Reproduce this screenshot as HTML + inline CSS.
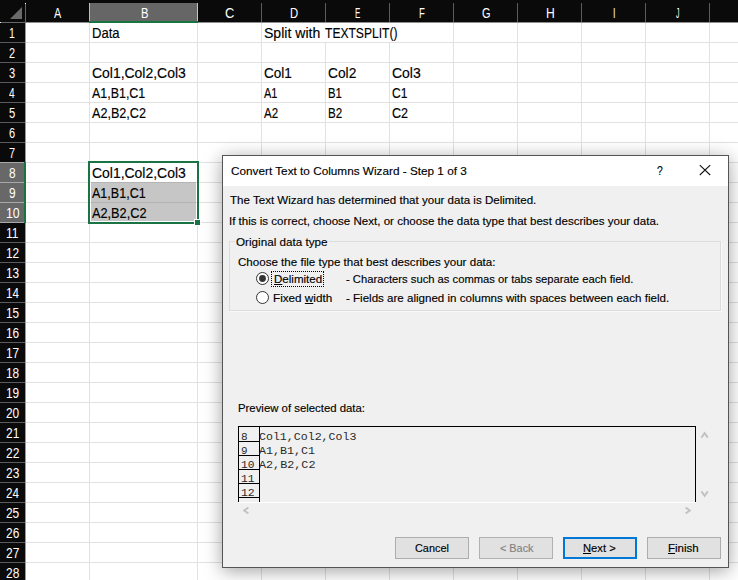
<!DOCTYPE html>
<html lang="en"><head><meta charset="utf-8"><title>Convert Text to Columns Wizard</title>
<style>
html,body{margin:0;padding:0;}
body{width:738px;height:580px;overflow:hidden;background:#fff;position:relative;font-family:"Liberation Sans",sans-serif;}
.a{position:absolute;}
.t{position:absolute;white-space:nowrap;line-height:20px;height:20px;transform-origin:0 50%;color:#000;}
.t u{text-decoration:underline;text-decoration-thickness:1px;text-underline-offset:1px;}
.d{-webkit-text-stroke:0.15px currentColor;}
.g{-webkit-text-stroke:0.15px currentColor;}
.gv{position:absolute;top:23px;width:1px;height:557px;background:#e1e1e1;}
.gh{position:absolute;left:26px;width:712px;height:1px;background:#e1e1e1;}
.hs{position:absolute;top:3px;width:1px;height:19px;background:#5c5c62;}
.rs{position:absolute;left:0;width:25px;height:1px;background:#5a5a60;}
.btn{position:absolute;top:537px;width:72px;height:20px;border:1px solid #adadad;background:#e1e1e1;}
</style></head><body>

<div class="gv" style="left:89px"></div>
<div class="gv" style="left:197px"></div>
<div class="gv" style="left:261px"></div>
<div class="gv" style="left:325px"></div>
<div class="gv" style="left:389px"></div>
<div class="gv" style="left:453px"></div>
<div class="gv" style="left:517px"></div>
<div class="gv" style="left:581px"></div>
<div class="gv" style="left:645px"></div>
<div class="gv" style="left:709px"></div>
<div class="gh" style="top:42px"></div>
<div class="gh" style="top:62px"></div>
<div class="gh" style="top:82px"></div>
<div class="gh" style="top:102px"></div>
<div class="gh" style="top:122px"></div>
<div class="gh" style="top:142px"></div>
<div class="gh" style="top:162px"></div>
<div class="gh" style="top:182px"></div>
<div class="gh" style="top:202px"></div>
<div class="gh" style="top:222px"></div>
<div class="gh" style="top:242px"></div>
<div class="gh" style="top:262px"></div>
<div class="gh" style="top:282px"></div>
<div class="gh" style="top:302px"></div>
<div class="gh" style="top:322px"></div>
<div class="gh" style="top:342px"></div>
<div class="gh" style="top:362px"></div>
<div class="gh" style="top:382px"></div>
<div class="gh" style="top:402px"></div>
<div class="gh" style="top:422px"></div>
<div class="gh" style="top:442px"></div>
<div class="gh" style="top:462px"></div>
<div class="gh" style="top:482px"></div>
<div class="gh" style="top:502px"></div>
<div class="gh" style="top:522px"></div>
<div class="gh" style="top:542px"></div>
<div class="gh" style="top:562px"></div>
<div class="a" style="left:325px;top:23px;width:1px;height:19px;background:#fff"></div>
<div class="a" style="left:389px;top:23px;width:1px;height:19px;background:#fff"></div>
<div class="a" style="left:0;top:0;width:738px;height:22px;background:#0a0a0a"></div>
<div class="a" style="left:26px;top:22px;width:712px;height:1px;background:#8e8e8e"></div>
<div class="a" style="left:0;top:0;width:25px;height:580px;background:#0a0a0a"></div>
<div class="a" style="left:25px;top:23px;width:1px;height:557px;background:#9a9a9a"></div>
<div class="a" style="left:25px;top:3px;width:1px;height:20px;background:#66666c"></div>
<div class="a" style="left:25px;top:3px;width:1px;height:1px;background:#fff"></div>
<div class="a" style="left:0;top:22px;width:26px;height:1px;background:#66666c"></div>
<div class="a" style="left:0;top:22px;width:1px;height:1px;background:#e8e8e8"></div>
<svg class="a" style="left:10px;top:7px" width="13" height="13" viewBox="0 0 13 13"><polygon points="12,0 12,12 0,12" fill="#6a6a6a"/></svg>
<div class="hs" style="left:261px"></div>
<div class="hs" style="left:325px"></div>
<div class="hs" style="left:389px"></div>
<div class="hs" style="left:453px"></div>
<div class="hs" style="left:517px"></div>
<div class="hs" style="left:581px"></div>
<div class="hs" style="left:645px"></div>
<div class="hs" style="left:709px"></div>
<div class="rs" style="top:42px"></div>
<div class="rs" style="top:62px"></div>
<div class="rs" style="top:82px"></div>
<div class="rs" style="top:102px"></div>
<div class="rs" style="top:122px"></div>
<div class="rs" style="top:142px"></div>
<div class="rs" style="top:162px"></div>
<div class="rs" style="top:182px"></div>
<div class="rs" style="top:202px"></div>
<div class="rs" style="top:222px"></div>
<div class="rs" style="top:242px"></div>
<div class="rs" style="top:262px"></div>
<div class="rs" style="top:282px"></div>
<div class="rs" style="top:302px"></div>
<div class="rs" style="top:322px"></div>
<div class="rs" style="top:342px"></div>
<div class="rs" style="top:362px"></div>
<div class="rs" style="top:382px"></div>
<div class="rs" style="top:402px"></div>
<div class="rs" style="top:422px"></div>
<div class="rs" style="top:442px"></div>
<div class="rs" style="top:462px"></div>
<div class="rs" style="top:482px"></div>
<div class="rs" style="top:502px"></div>
<div class="rs" style="top:522px"></div>
<div class="rs" style="top:542px"></div>
<div class="rs" style="top:562px"></div>
<div class="a" style="left:89px;top:3px;width:109px;height:18px;background:#666"></div>
<div class="a" style="left:89px;top:3px;width:1px;height:18px;background:#bdbdbd"></div>
<div class="a" style="left:197px;top:3px;width:1px;height:18px;background:#c4c4c4"></div>
<div class="a" style="left:89px;top:21px;width:109px;height:2px;background:#17753f"></div>
<div class="a" style="left:0;top:162px;width:24px;height:61px;background:#686868"></div>
<div class="a" style="left:0;top:162px;width:24px;height:1px;background:#a8a8a8"></div>
<div class="a" style="left:0;top:182px;width:24px;height:1px;background:#a8a8a8"></div>
<div class="a" style="left:0;top:202px;width:24px;height:1px;background:#a8a8a8"></div>
<div class="a" style="left:0;top:222px;width:24px;height:1px;background:#a8a8a8"></div>
<div class="a" style="left:24px;top:162px;width:2px;height:61px;background:#17753f"></div>
<div class="a" style="left:91px;top:183px;width:105px;height:38px;background:#c6c6c6"></div>
<div class="a" style="left:91px;top:202px;width:105px;height:1px;background:#b4b4b4"></div>
<div class="a" style="left:91px;top:182px;width:105px;height:1px;background:#b4b4b4"></div>
<div class="a" style="left:88px;top:161px;width:107px;height:59px;border:2px solid #1a7343"></div>
<div class="a" style="left:194px;top:219px;width:5px;height:5px;background:#1a7343;border:1px solid #fff"></div>
<div class="a" id="dlg" style="left:222px;top:155px;width:505px;height:411px;border:1px solid #555;background:#f0f0f0;box-shadow:0 3px 17px rgba(0,0,0,.37)"></div>
<div class="a" style="left:223px;top:156px;width:505px;height:30px;background:#fff"></div>
<svg class="a" style="left:699px;top:164px" width="13" height="13" viewBox="0 0 13 13"><path d="M0.8 1.2L11.2 11M11.2 1.2L0.8 11" stroke="#111" stroke-width="1.1" fill="none"/></svg>
<div class="a" style="left:229px;top:241px;width:490px;height:68px;border:1px solid #dcdcdc;box-shadow:1px 1px 0 #f8f8f8"></div>
<div class="a" style="left:235px;top:236px;width:94px;height:12px;background:#f0f0f0"></div>
<svg class="a" style="left:255px;top:271px" width="15" height="15" viewBox="0 0 15 15"><circle cx="7.5" cy="7.5" r="6" fill="#fff" stroke="#333" stroke-width="1"/><circle cx="7.5" cy="7.5" r="3.4" fill="#333"/></svg>
<svg class="a" style="left:255px;top:290px" width="15" height="15" viewBox="0 0 15 15"><circle cx="7.5" cy="7.5" r="6" fill="#fff" stroke="#333" stroke-width="1"/></svg>
<div class="a" style="left:271px;top:271px;width:53px;height:16px;border:1px dotted #000;box-sizing:border-box"></div>
<div class="a" style="left:238px;top:426px;width:458px;height:1px;background:#000"></div>
<div class="a" style="left:238px;top:426px;width:1px;height:76px;background:#000"></div>
<div class="a" style="left:695px;top:426px;width:1px;height:76px;background:#000"></div>
<div class="a" style="left:238px;top:502px;width:458px;height:1px;background:#fff"></div>
<div class="a" style="left:259px;top:426px;width:1px;height:76px;background:#000"></div>
<div class="a" style="left:238px;top:441px;width:22px;height:1px;background:#000"></div>
<div class="a" style="left:238px;top:455px;width:22px;height:1px;background:#000"></div>
<div class="a" style="left:238px;top:469px;width:22px;height:1px;background:#000"></div>
<div class="a" style="left:238px;top:483px;width:22px;height:1px;background:#000"></div>
<div class="a" style="left:238px;top:497px;width:22px;height:1px;background:#000"></div>
<svg class="a" style="left:699px;top:430px" width="12" height="10" viewBox="0 0 12 10"><path d="M2.4 7.6L5.6 3.2L8.8 7.6" stroke="#c1c1c1" stroke-width="1.9" fill="none"/></svg>
<svg class="a" style="left:699px;top:489px" width="12" height="10" viewBox="0 0 12 10"><path d="M2.4 2.4L5.6 6.8L8.8 2.4" stroke="#c1c1c1" stroke-width="1.9" fill="none"/></svg>
<svg class="a" style="left:241px;top:505px" width="10" height="12" viewBox="0 0 10 12"><path d="M7.4 2.4L3.2 5.5L7.4 8.6" stroke="#c1c1c1" stroke-width="1.9" fill="none"/></svg>
<svg class="a" style="left:683px;top:505px" width="10" height="12" viewBox="0 0 10 12"><path d="M2.6 2.4L6.8 5.5L2.6 8.6" stroke="#c1c1c1" stroke-width="1.9" fill="none"/></svg>
<div class="btn" style="left:395px"></div>
<div class="btn" style="left:479px;border-color:#b2b2b2"></div>
<div class="btn" style="left:563px;border:2px solid #0078d7;width:70px;height:18px"></div>
<div class="btn" style="left:647px"></div>
<span class="t g" style="left:92.20px;top:23.00px;font-size:14px;transform:scaleX(0.9331);">Data</span>
<span class="t g" style="left:92.02px;top:63.00px;font-size:14px;transform:scaleX(0.9959);">Col1,Col2,Col3</span>
<span class="t g" style="left:92.40px;top:83.00px;font-size:14px;transform:scaleX(0.8885);">A1,B1,C1</span>
<span class="t g" style="left:92.20px;top:103.00px;font-size:14px;transform:scaleX(0.9009);">A2,B2,C2</span>
<span class="t g" style="left:263.69px;top:23.00px;font-size:14px;transform:scaleX(1.0035);">Split with </span>
<span class="t g" style="left:324.50px;top:23.00px;font-size:14px;transform:scaleX(0.8629);">TEXTSPLIT()</span>
<span class="t g" style="left:263.82px;top:63.00px;font-size:14px;transform:scaleX(0.9680);">Col1</span>
<span class="t g" style="left:328.12px;top:63.00px;font-size:14px;transform:scaleX(0.9829);">Col2</span>
<span class="t g" style="left:392.23px;top:63.00px;font-size:14px;transform:scaleX(0.9958);">Col3</span>
<span class="t g" style="left:264.11px;top:83.00px;font-size:14px;transform:scaleX(0.7881);">A1</span>
<span class="t g" style="left:327.79px;top:83.00px;font-size:14px;transform:scaleX(0.8096);">B1</span>
<span class="t g" style="left:392.34px;top:83.00px;font-size:14px;transform:scaleX(0.8576);">C1</span>
<span class="t g" style="left:264.00px;top:103.00px;font-size:14px;transform:scaleX(0.8220);">A2</span>
<span class="t g" style="left:327.87px;top:103.00px;font-size:14px;transform:scaleX(0.8307);">B2</span>
<span class="t g" style="left:392.42px;top:103.00px;font-size:14px;transform:scaleX(0.8954);">C2</span>
<span class="t g" style="left:92.02px;top:163.00px;font-size:14px;transform:scaleX(0.9959);">Col1,Col2,Col3</span>
<span class="t g" style="left:92.39px;top:183.00px;font-size:14px;transform:scaleX(0.8959);">A1,B1,C1</span>
<span class="t g" style="left:92.34px;top:203.00px;font-size:14px;transform:scaleX(0.9096);">A2,B2,C2</span>
<span class="t" style="left:54.25px;top:3.00px;font-size:14px;color:#fff;transform:scaleX(0.7746);">A</span>
<span class="t" style="left:141.21px;top:3.00px;font-size:14px;color:#fff;transform:scaleX(0.8020);">B</span>
<span class="t" style="left:225.23px;top:3.00px;font-size:14px;color:#fff;transform:scaleX(0.9195);">C</span>
<span class="t" style="left:289.99px;top:3.00px;font-size:14px;color:#fff;transform:scaleX(0.8057);">D</span>
<span class="t" style="left:355.00px;top:3.00px;font-size:14px;color:#fff;transform:scaleX(0.5672);">E</span>
<span class="t" style="left:419.15px;top:3.00px;font-size:14px;color:#fff;transform:scaleX(0.6805);">F</span>
<span class="t" style="left:481.73px;top:3.00px;font-size:14px;color:#fff;transform:scaleX(0.7849);">G</span>
<span class="t" style="left:545.92px;top:3.00px;font-size:14px;color:#fff;transform:scaleX(0.8666);">H</span>
<span class="t" style="left:613.04px;top:3.00px;font-size:14px;color:#fff;transform:scaleX(0.6279);">I</span>
<span class="t" style="left:675.50px;top:3.00px;font-size:14px;color:#fff;transform:scaleX(0.4857);">J</span>
<span class="t" style="left:9.12px;top:23.00px;font-size:14px;color:#fff;transform:scaleX(0.7529);">1</span>
<span class="t" style="left:9.45px;top:43.00px;font-size:14px;color:#fff;transform:scaleX(0.7779);">2</span>
<span class="t" style="left:9.47px;top:63.00px;font-size:14px;color:#fff;transform:scaleX(0.7895);">3</span>
<span class="t" style="left:9.25px;top:83.00px;font-size:14px;color:#fff;transform:scaleX(0.7300);">4</span>
<span class="t" style="left:9.21px;top:103.00px;font-size:14px;color:#fff;transform:scaleX(0.8018);">5</span>
<span class="t" style="left:9.49px;top:123.00px;font-size:14px;color:#fff;transform:scaleX(0.7877);">6</span>
<span class="t" style="left:9.44px;top:143.00px;font-size:14px;color:#fff;transform:scaleX(0.7781);">7</span>
<span class="t" style="left:8.86px;top:163.00px;font-size:14px;color:#fff;transform:scaleX(0.8471);">8</span>
<span class="t" style="left:8.83px;top:183.00px;font-size:14px;color:#fff;transform:scaleX(0.8489);">9</span>
<span class="t" style="left:5.70px;top:203.00px;font-size:14px;color:#fff;transform:scaleX(0.8770);">10</span>
<span class="t" style="left:6.21px;top:223.00px;font-size:14px;color:#fff;transform:scaleX(0.8546);">11</span>
<span class="t" style="left:6.11px;top:243.00px;font-size:14px;color:#fff;transform:scaleX(0.8485);">12</span>
<span class="t" style="left:6.12px;top:263.00px;font-size:14px;color:#fff;transform:scaleX(0.8472);">13</span>
<span class="t" style="left:6.11px;top:283.00px;font-size:14px;color:#fff;transform:scaleX(0.8278);">14</span>
<span class="t" style="left:6.13px;top:303.00px;font-size:14px;color:#fff;transform:scaleX(0.8409);">15</span>
<span class="t" style="left:6.12px;top:323.00px;font-size:14px;color:#fff;transform:scaleX(0.8440);">16</span>
<span class="t" style="left:6.11px;top:343.00px;font-size:14px;color:#fff;transform:scaleX(0.8485);">17</span>
<span class="t" style="left:6.12px;top:363.00px;font-size:14px;color:#fff;transform:scaleX(0.8461);">18</span>
<span class="t" style="left:6.12px;top:383.00px;font-size:14px;color:#fff;transform:scaleX(0.8479);">19</span>
<span class="t" style="left:5.96px;top:403.00px;font-size:14px;color:#fff;transform:scaleX(0.8482);">20</span>
<span class="t" style="left:5.96px;top:423.00px;font-size:14px;color:#fff;transform:scaleX(0.8525);">21</span>
<span class="t" style="left:5.96px;top:443.00px;font-size:14px;color:#fff;transform:scaleX(0.8546);">22</span>
<span class="t" style="left:5.96px;top:463.00px;font-size:14px;color:#fff;transform:scaleX(0.8540);">23</span>
<span class="t" style="left:6.03px;top:483.00px;font-size:14px;color:#fff;transform:scaleX(0.8333);">24</span>
<span class="t" style="left:5.96px;top:503.00px;font-size:14px;color:#fff;transform:scaleX(0.8503);">25</span>
<span class="t" style="left:5.96px;top:523.00px;font-size:14px;color:#fff;transform:scaleX(0.8509);">26</span>
<span class="t" style="left:5.96px;top:543.00px;font-size:14px;color:#fff;transform:scaleX(0.8546);">27</span>
<span class="t" style="left:5.96px;top:563.00px;font-size:14px;color:#fff;transform:scaleX(0.8540);">28</span>
<span class="t d" style="left:231.35px;top:161.00px;font-size:11.5px;transform:scaleX(1.0228);">Convert Text to Columns Wizard - Step 1 of 3</span>
<span class="t d" style="left:657.23px;top:160.50px;font-size:13px;transform:scaleX(0.7981);">?</span>
<span class="t d" style="left:229.50px;top:190.00px;font-size:11.5px;transform:scaleX(1.0053);">The Text Wizard has determined that your data is Delimited.</span>
<span class="t d" style="left:228.78px;top:211.00px;font-size:11.5px;transform:scaleX(1.0041);">If this is correct, choose Next, or choose the data type that best describes your data.</span>
<span class="t d" style="left:235.80px;top:232.00px;font-size:11.5px;transform:scaleX(1.0151);">Original data type</span>
<span class="t d" style="left:238.45px;top:252.00px;font-size:11.5px;transform:scaleX(1.0068);">Choose the file type that best describes your data:</span>
<span class="t d" style="left:273.59px;top:269.00px;font-size:11.5px;transform:scaleX(1.0050);"><u>D</u>elimited</span>
<span class="t d" style="left:345.91px;top:269.00px;font-size:11.5px;transform:scaleX(0.9751);">- Characters such as commas or tabs separate each field.</span>
<span class="t d" style="left:273.46px;top:288.00px;font-size:11.5px;transform:scaleX(1.0164);">Fixed <u>w</u>idth</span>
<span class="t d" style="left:345.87px;top:288.00px;font-size:11.5px;transform:scaleX(1.0049);">- Fields are aligned in columns with spaces between each field.</span>
<span class="t d" style="left:237.98px;top:398.00px;font-size:11.5px;transform:scaleX(0.9882);">Preview of selected data:</span>
<span class="t d" style="left:415.33px;top:538.00px;font-size:11.5px;transform:scaleX(0.9459);">Cancel</span>
<span class="t d" style="left:499.95px;top:538.00px;font-size:11.5px;color:#838383;transform:scaleX(0.9441);">&lt; Back</span>
<span class="t d" style="left:583.21px;top:538.00px;font-size:11.5px;transform:scaleX(0.9746);"><u>N</u>ext &gt;</span>
<span class="t d" style="left:668.06px;top:538.00px;font-size:11.5px;transform:scaleX(1.0031);"><u>F</u>inish</span>
<span class="t" style="left:241.34px;top:426.50px;font-size:11.5px;color:#2a2a2a;font-family:'Liberation Mono', monospace;transform:scaleX(0.9642);">8</span>
<span class="t" style="left:241.36px;top:440.50px;font-size:11.5px;color:#2a2a2a;font-family:'Liberation Mono', monospace;transform:scaleX(0.9453);">9</span>
<span class="t" style="left:241.10px;top:454.50px;font-size:11.5px;color:#2a2a2a;font-family:'Liberation Mono', monospace;transform:scaleX(0.9745);">10</span>
<span class="t" style="left:241.18px;top:468.50px;font-size:11.5px;color:#2a2a2a;font-family:'Liberation Mono', monospace;transform:scaleX(0.9782);">11</span>
<span class="t" style="left:241.16px;top:482.50px;font-size:11.5px;color:#2a2a2a;font-family:'Liberation Mono', monospace;transform:scaleX(0.9943);">12</span>
<span class="t" style="left:259.45px;top:426.50px;font-size:11.5px;color:#2a2a2a;font-family:'Liberation Mono', monospace;transform:scaleX(1.0076);">Col1,Col2,Col3</span>
<span class="t" style="left:259.17px;top:440.50px;font-size:11.5px;color:#2a2a2a;font-family:'Liberation Mono', monospace;transform:scaleX(1.0142);">A1,B1,C1</span>
<span class="t" style="left:259.17px;top:454.50px;font-size:11.5px;color:#2a2a2a;font-family:'Liberation Mono', monospace;transform:scaleX(1.0228);">A2,B2,C2</span>
</body></html>
